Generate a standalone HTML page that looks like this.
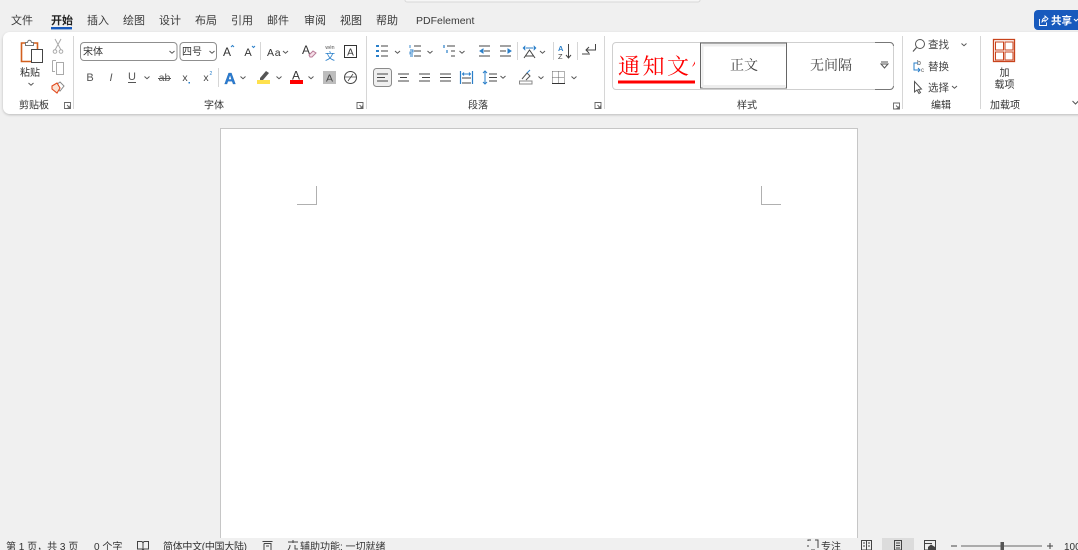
<!DOCTYPE html>
<html><head><meta charset="utf-8"><style>
html,body{margin:0;padding:0;width:1078px;height:550px;overflow:hidden;background:#f0f0f0}
svg{display:block}
text{font-family:"Liberation Sans","Noto Sans CJK SC",sans-serif;fill:#333;font-size:10px;filter:blur(.25px)}
.t{font-size:11px;fill:#3a3a3a;dominant-baseline:auto}
.c{text-anchor:middle}
.s{font-size:10.5px;fill:#444}
.l{stroke:#444;stroke-width:1;fill:none}
.b{stroke:#2a7fc9;stroke-width:1;fill:none}
.sep{stroke:#d6d6d6;stroke-width:1}
.ch{stroke:#555;stroke-width:1;fill:none}
</style></head><body>
<svg width="1078" height="550" viewBox="0 0 1078 550" xmlns="http://www.w3.org/2000/svg">
<defs>
<filter id="sh" x="-2%" y="-10%" width="104%" height="125%"><feDropShadow dx="0" dy="1" stdDeviation="1.3" flood-color="#000" flood-opacity=".22"/></filter>
<path id="v" d="M-2.5 -1L0 1.2L2.5 -1" class="ch"/>
<path id="lnc" d="M-3 -3H3V3H-3ZM-.5 -.5L2.500 2.500M2.500 0V2.500H0" fill="none" stroke="#666" stroke-width=".9"/>
</defs>
<rect width="1078" height="550" fill="#f0f0f0"/>
<!-- title search remnant -->
<rect x="405" y="-6" width="295" height="8" rx="2" fill="#f6f6f6" stroke="#d8d8d8"/>
<!-- tabs -->
<g class="tabs">
<text class="t" x="11" y="24">文件</text>
<text class="t" x="51" y="24" style="font-weight:bold;fill:#222">开始</text>
<rect x="51" y="27" width="21" height="2.4" fill="#185abd"/>
<text class="t" x="87" y="24">插入</text>
<text class="t" x="123" y="24">绘图</text>
<text class="t" x="159" y="24">设计</text>
<text class="t" x="195" y="24">布局</text>
<text class="t" x="231" y="24">引用</text>
<text class="t" x="267" y="24">邮件</text>
<text class="t" x="304" y="24">审阅</text>
<text class="t" x="340" y="24">视图</text>
<text class="t" x="376" y="24">帮助</text>
<text class="t" x="416" y="24" style="font-size:10.5px">PDFelement</text>
</g>
<!-- share -->
<rect x="1034" y="10" width="60" height="20" rx="4" fill="#185abd"/>
<path d="M1039.500 19V25.500H1046.500V22.500M1042 22C1042 19.500 1043.500 18 1045 18V16L1048 18.800L1045 21.500V20C1044 20 1043 21 1042 22Z" fill="none" stroke="#fff" stroke-width=".9"/>
<text x="1051" y="24" style="font-size:10.5px;fill:#fff;font-weight:bold">共享</text>
<path d="M1074 19L1076 21L1078 19" stroke="#fff" fill="none"/>
<!-- ribbon -->
<rect x="3" y="32" width="1085" height="82" rx="7" fill="#fff" filter="url(#sh)"/>
<!-- separators -->
<g class="sep">
<line x1="73.5" y1="36" x2="73.5" y2="109"/>
<line x1="366.5" y1="36" x2="366.5" y2="109"/>
<line x1="604.5" y1="36" x2="604.5" y2="109"/>
<line x1="902.5" y1="36" x2="902.5" y2="109"/>
<line x1="980.5" y1="36" x2="980.5" y2="109"/>
<line x1="260.5" y1="42" x2="260.5" y2="60"/>
<line x1="218.5" y1="68" x2="218.5" y2="87"/>
<line x1="517.5" y1="42" x2="517.5" y2="60"/>
<line x1="553.5" y1="42" x2="553.5" y2="60"/>
<line x1="577.5" y1="42" x2="577.5" y2="60"/>
</g>
<!-- clipboard group -->
<path d="M25.5 43H21.500V61.500H32M33 43H37.500V49" fill="#fff" stroke="#d2601f" stroke-width="1.600"/>
<path d="M25.5 45.5V42.5H27.5C28 39.500 31 39.500 31.500 42.500H33.500V45.500Z" fill="#fff" stroke="#777"/>
<rect x="31.5" y="49.5" width="11" height="13" fill="#fff" stroke="#444"/>
<text class="c" x="30" y="76" style="font-size:10px">粘贴</text>
<use href="#v" x="31" y="84"/>
<text class="c" x="34" y="108.500" style="font-size:10px">剪贴板</text>
<use href="#lnc" x="67.5" y="105.5"/>
<path d="M55 39L61 50M61 39L55 50" fill="none" stroke="#aaa"/>
<circle cx="55" cy="51.500" r="1.800" fill="none" stroke="#aaa"/><circle cx="61" cy="51.500" r="1.800" fill="none" stroke="#aaa"/>
<path d="M52.5 60.5H56M52.5 60.5V71.5H55M56.5 62.5H63.5V74.5H56.5Z" fill="none" stroke="#aaa"/>
<path d="M60 82L64 86L60 91L56 85Z" fill="none" stroke="#888"/>
<path d="M52 86L57 83L60 88L57 93L52 89Z" fill="#fbe3d4" stroke="#e2491c" stroke-width="1.100"/>
<!-- font -->
<rect x="80.5" y="42.5" width="96.5" height="18" rx="3.5" fill="#fff" stroke="#8f8f8f"/>
<text x="83" y="55" style="font-size:10px">宋体</text>
<use href="#v" x="172" y="52"/>
<rect x="180" y="42.5" width="36.5" height="18" rx="3.5" fill="#fff" stroke="#8f8f8f"/>
<text x="182" y="55" style="font-size:10px">四号</text>
<use href="#v" x="212" y="52"/>
<text class="c" x="227" y="56" style="font-size:12px">A</text>
<path d="M231 47L232.500 45.500L234 47" fill="none" stroke="#2a7fc9"/>
<text class="c" x="248" y="56" style="font-size:11px">A</text>
<path d="M252 46L253.500 47.500L255 46" fill="none" stroke="#2a7fc9"/>
<text x="267" y="56" style="font-size:10.500px;letter-spacing:.8px">Aa</text>
<use href="#v" x="285.500" y="52"/>
<text x="302" y="54" style="font-size:12px">A</text>
<path d="M309 55L313 51L316 53L312 57H310Z" fill="#f5dfe8" stroke="#b87a96"/>
<text class="c" x="330" y="49" style="font-size:5px;fill:#555">wén</text>
<text class="c" x="330" y="60" style="font-size:10px;fill:#2a7fc9">文</text>
<rect x="344.500" y="45.500" width="12" height="12" fill="none" stroke="#333"/>
<text class="c" x="350.500" y="55.500" style="font-size:10px">A</text>
<text class="c" x="90" y="81" style="font-size:11px;fill:#555">B</text>
<text class="c" x="111" y="81" style="font-size:11px;font-style:italic;fill:#555">I</text>
<text class="c" x="132" y="80" style="font-size:11px;fill:#555">U</text>
<line x1="128" y1="82.500" x2="136" y2="82.500" stroke="#555"/>
<use href="#v" x="147" y="77.500"/>
<text class="c" x="164.500" y="81" style="font-size:10.500px;fill:#555">ab</text>
<line x1="158" y1="78.500" x2="171" y2="78.500" stroke="#555"/>
<text class="c" x="185" y="81" style="font-size:10.500px;fill:#444">x</text>
<rect x="188.500" y="82" width="1.500" height="1.500" fill="#2a7fc9"/>
<text class="c" x="206" y="81" style="font-size:10.500px;fill:#444">x</text>
<text x="209.500" y="75" style="font-size:5px;fill:#2a7fc9">2</text>
<text class="c" x="230" y="84" style="font-size:16px;font-weight:bold;fill:#2b7cd3;stroke:#155a9c;stroke-width:.3">A</text>
<use href="#v" x="243" y="77.500"/>
<path d="M260 78L266 71L269 73L263 80H260Z" fill="#555"/>
<rect x="257" y="80" width="13" height="4" fill="#ffe14d"/>
<use href="#v" x="279" y="77.500"/>
<text class="c" x="296" y="79.500" style="font-size:12px">A</text>
<rect x="290" y="80" width="13" height="4" fill="#f00"/>
<use href="#v" x="311" y="77.500"/>
<rect x="323" y="71" width="13" height="13" fill="#bdbdbd"/>
<text class="c" x="329.500" y="81.500" style="font-size:10.500px;fill:#444">A</text>
<circle cx="350.500" cy="77.500" r="6" fill="none" stroke="#444"/>
<path d="M345 77H356M348 81L353 74" fill="none" stroke="#444" stroke-width=".8"/>
<text class="c" x="214" y="108.500" style="font-size:10px">字体</text>
<use href="#lnc" x="360" y="105.500"/>
<!-- paragraph row 1 -->
<path d="M376 46h3M376 51h3M376 56h3" stroke="#2a7fc9" stroke-width="2"/>
<path d="M381 46h7M381 51h7M381 56h7" class="l"/>
<use href="#v" x="397.500" y="52"/>
<path d="M410 45v3M410 50h3v2h-3v2h3M410 56h3" stroke="#2a7fc9" fill="none" stroke-width=".9"/>
<path d="M414 46h7M414 51h7M414 56h7" class="l"/>
<use href="#v" x="430" y="52"/>
<path d="M444 45v3M447 50v3" stroke="#2a7fc9" stroke-width="1.200"/>
<path d="M447 46h8M451 51h4M451 56h4" class="l"/>
<use href="#v" x="462" y="52"/>
<path d="M479 46h11M484 51h6M479 56h11" class="l"/><path d="M483 49L480 51L483 53Z" fill="#2a7fc9" stroke="#2a7fc9"/>
<path d="M500 46h11M500 51h6M500 56h11" class="l"/><path d="M508 49L511 51L508 53Z" fill="#2a7fc9" stroke="#2a7fc9"/>
<path d="M523 48L525 46V50ZM536 48L534 46V50Z" fill="#2a7fc9" stroke="#2a7fc9" stroke-width=".6"/>
<path d="M526 48H533" class="b"/>
<path d="M524 58L529.500 50L535 58M525 56H534" class="l"/>
<use href="#v" x="542.500" y="52"/>
<text x="558" y="51" style="font-size:7.500px;font-weight:bold;fill:#2a7fc9">A</text>
<text x="558" y="59" style="font-size:7.500px;fill:#444">Z</text>
<path d="M568.500 44V58M566 55L568.500 58L571 55" class="l"/>
<path d="M595.500 44V50H586M589 47L586 50L589 53M582 54H590" class="l"/>
<!-- paragraph row 2 -->
<rect x="373.500" y="68.500" width="18" height="18" rx="3" fill="#efefef" stroke="#8a8a8a"/>
<path d="M378 74h11M378 77.500h8M378 81h11" class="l" transform="translate(-1,0)"/>
<path d="M398 74h11M400 77.500h7M398 81h11" class="l"/>
<path d="M419 74h11M422 77.500h8M419 81h11" class="l"/>
<path d="M440 74h11M440 77.500h11M440 81h11" class="l"/>
<path d="M460.500 71V84M472.500 71V84" stroke="#2a7fc9" fill="none" stroke-width="1.200"/>
<path d="M463 74H470M464 72.500L462.500 74L464 75.500M469 72.500L470.500 74L469 75.500" class="b"/>
<path d="M462 78h9M462 83h9" class="l"/>
<path d="M485 71V84M483 73L485 71L487 73M483 82L485 84L487 82" class="b"/>
<path d="M489 74h8M489 77.500h8M489 81h8" class="l"/>
<use href="#v" x="503" y="77"/>
<path d="M522 79L527 73L530 76L526 80" fill="none" stroke="#555"/>
<path d="M527 73L530 70" class="b"/>
<rect x="519.500" y="81" width="12.500" height="3" fill="#fff" stroke="#888"/>
<use href="#v" x="541" y="77.500"/>
<path d="M552.500 71.500H564.500V83M552.500 71.500V83M558.500 71.500V83M552.500 77.500H564.500" fill="none" stroke="#666" stroke-dasharray="1 1"/>
<path d="M552 83.500H565" stroke="#333"/>
<use href="#v" x="574" y="77.500"/>
<text class="c" x="478" y="108.500" style="font-size:10px">段落</text>
<use href="#lnc" x="598" y="105.500"/>
<!-- styles gallery -->
<rect x="612.500" y="42.500" width="281" height="47" rx="3.500" fill="#fff" stroke="#cfcfcf"/>
<path d="M875 42.500H890A3.500 3.500 0 0 1 893.500 46M893.500 86A3.500 3.500 0 0 1 890 89.500H875" fill="none" stroke="#777"/>
<svg x="616" y="48" width="79" height="34" viewBox="0 0 79 34">
<text x="2" y="26" style="font-family:'Liberation Serif','Noto Serif CJK SC',serif;font-size:22px;fill:#f00;letter-spacing:2.500px">通知文件</text>
</svg>
<rect x="618" y="80.500" width="77" height="3" fill="#f00"/>
<rect x="700.500" y="43" width="86" height="45" fill="#fff" stroke="#666"/>
<path d="M702.500 45H785.500M702.500 86.500H785.500" stroke="#ededed" stroke-width="3"/>
<path d="M702.500 44.500V87.500" stroke="#ededed" stroke-width="2"/>
<text class="c" x="744" y="70" style="font-family:'Liberation Serif','Noto Serif CJK SC',serif;font-size:14px;fill:#444">正文</text>
<text class="c" x="831" y="70" style="font-family:'Liberation Serif','Noto Serif CJK SC',serif;font-size:14px;fill:#444">无间隔</text>
<path d="M881 62H888M881 64L884.500 68L888 64Z" fill="none" stroke="#555"/>
<text class="c" x="747" y="108.500" style="font-size:10px">样式</text>
<use href="#lnc" x="896.500" y="106"/>
<!-- editing -->
<circle cx="920" cy="44" r="4.500" fill="none" stroke="#555"/>
<path d="M916.500 47.500L913 51.500" stroke="#555" stroke-width="1.200"/>
<text class="s" x="928" y="48">查找</text>
<use href="#v" x="964" y="44.500"/>
<text x="917" y="65" style="font-size:7px;fill:#555">b</text>
<path d="M918 63H914V70H920M918 68L920 70L918 72" class="b" stroke-width="1.300"/>
<text x="921" y="72" style="font-size:6px;fill:#555">c</text>
<text class="s" x="928" y="70">替换</text>
<path d="M914.500 81.500V92L917 90L919 93.500L920.500 92.500L918.500 89.500L921.500 89Z" fill="#fff" stroke="#555"/>
<text class="s" x="928" y="91">选择</text>
<use href="#v" x="954.500" y="87"/>
<text class="c" x="941" y="108.500" style="font-size:10px">编辑</text>
<!-- add-ins -->
<rect x="993.500" y="39.500" width="21" height="22" fill="#fff" stroke="#c8431c" stroke-width="1.300"/>
<rect x="995.500" y="42" width="8" height="8" fill="#fff" stroke="#c8431c"/>
<rect x="1005" y="42" width="8" height="8" fill="#fff" stroke="#c8431c"/>
<rect x="995.500" y="52" width="8" height="8" fill="#fff" stroke="#c8431c"/>
<rect x="1005" y="52" width="8" height="8" fill="#fff" stroke="#c8431c"/>
<text class="c" x="1004.500" y="76" style="font-size:10px">加</text>
<text class="c" x="1004.500" y="88" style="font-size:10px">载项</text>
<text class="c" x="1005" y="108.500" style="font-size:10px">加载项</text>
<path d="M1072.500 101L1075.500 104L1078.500 101" fill="none" stroke="#555"/>
<!-- page -->
<rect x="220.500" y="128.500" width="637" height="430" fill="#fff" stroke="#c6c6c6"/>
<path d="M316.500 186V204.500H297" fill="none" stroke="#b0b0b0"/>
<path d="M761.500 186V204.500H781" fill="none" stroke="#b0b0b0"/>
<!-- status bar -->
<rect x="0" y="538" width="1078" height="12" fill="#f0f0f0"/>
<rect x="882" y="538" width="32" height="12" fill="#dcdcdc"/>
<g style="font-size:10px">
<text x="6" y="550" style="font-size:10px">第 1 页，共 3 页</text>
<text x="94" y="550" style="font-size:10px">0 个字</text>
<text x="163" y="550" style="font-size:10px" textLength="84">简体中文(中国大陆)</text>
<text x="300" y="550" style="font-size:10px">辅助功能: 一切就绪</text>
<text x="821" y="550" style="font-size:10px">专注</text>
<text x="1064" y="550" style="font-size:10px">100%</text>
</g>
<path d="M137.500 541.500H142L143 543L144 541.500H148.500V549H144L143 550.500L142 549H137.500ZM143 543V550" fill="none" stroke="#444"/>
<path d="M262.500 541.500H272.500M264 543.500H271V550M264 543.500V550M266 546H269" fill="none" stroke="#444"/>
<path d="M288 542H298M293 540V543M290 545C290 548 289 549 288 550M295 545V549H298" fill="none" stroke="#444"/>
<path d="M808 541V540H811M815 540H818V548M811 550H815M808 545V547" fill="none" stroke="#444"/>
<path d="M861.500 540.500H871.500V550H861.500ZM866.500 540.500V550M863 543H865M868 543H870M863 546H865M868 546H870" fill="none" stroke="#444"/>
<path d="M894.500 540.500H901.500V550H894.500ZM896 543H900M896 545.500H900M896 548H900" fill="none" stroke="#444"/>
<path d="M924.500 540.500H935.500V550H924.500ZM924.500 543.500H932" fill="none" stroke="#444"/>
<path d="M928 547L931 544.500L935 547V550H928Z" fill="#444"/>
<path d="M951 546H957M1047 546H1053M1050 543V549" stroke="#444" fill="none"/>
<path d="M961 546H1042" stroke="#666"/>
<rect x="1000.500" y="542" width="3.500" height="8" fill="#555"/>
</svg>
</body></html>
